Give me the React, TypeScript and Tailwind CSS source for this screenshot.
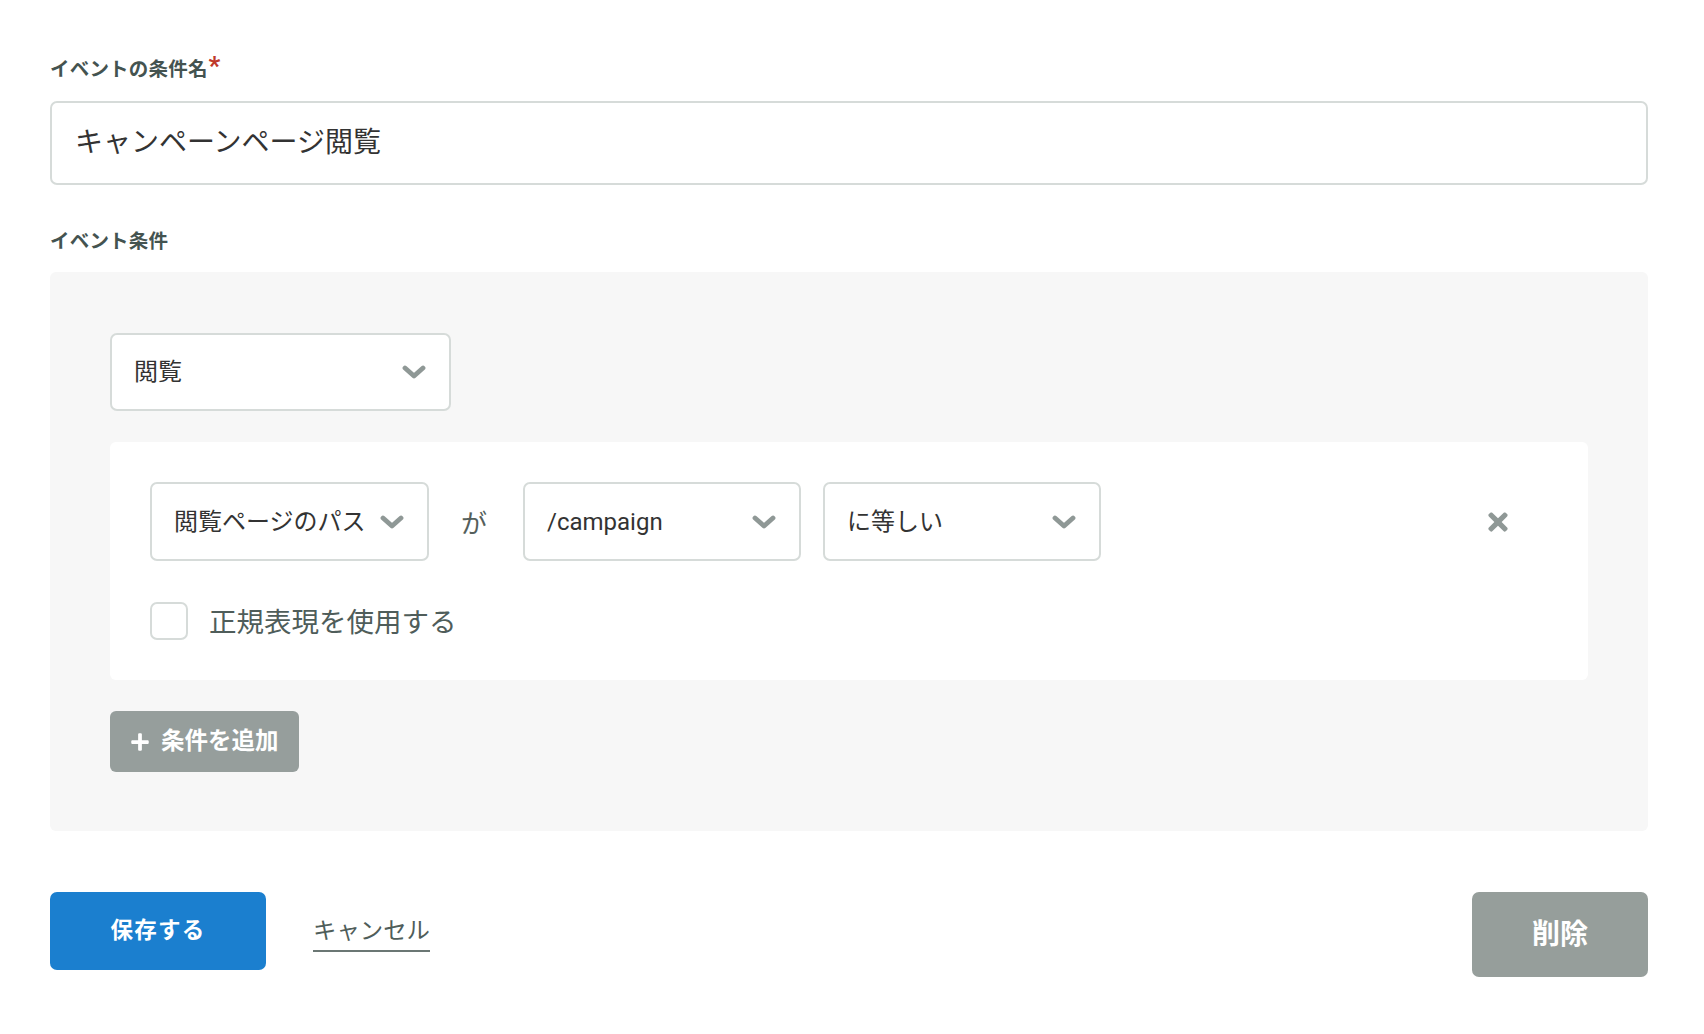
import { FaTimes, FaPlus } from 'react-icons/fa';

const Chevron = () => (
    <svg width="24" height="14" viewBox="0 0 24 14" className="text-[#8f9896]">
        <path
            d="M3 3 L12 11 L21 3"
            fill="none"
            stroke="currentColor"
            strokeWidth="4.8"
            strokeLinecap="round"
            strokeLinejoin="round"
        />
    </svg>
);

const Select = ({ label, width }: { label: string; width: string }) => {
    return (
        <div
            className={`flex items-center justify-between h-full ${width} bg-white border-2 border-[#d6dbd9] rounded-[7px] pl-[22px] pr-[23px]`}
        >
            <span className="text-[#333333] text-[24px] leading-none">{label}</span>
            <Chevron />
        </div>
    );
};

const App = () => {
    return (
        <div className="min-h-screen bg-white font-['Roboto','Noto_Sans_CJK_JP',sans-serif] pl-[50px] pr-[56px] pt-[56px] pb-[56px]">
            {/* 条件名 */}
            <div className="h-[28px] flex items-center text-[19.5px] font-bold text-[#445350] tracking-[0.2px]">
                イベントの条件名
                <span className="text-[#c0392b] text-[26px] font-bold self-start leading-none -mt-[3px] ml-[1px]">*</span>
            </div>
            <div className="mt-[17px] h-[84px] border-2 border-[#d6dbd9] rounded-[7px] flex items-center px-[23px]">
                <span className="text-[28px] text-[#333333] leading-none">キャンペーンページ閲覧</span>
            </div>

            {/* イベント条件 */}
            <div className="mt-[43px] h-[28px] flex items-center text-[19.5px] font-bold text-[#445350] tracking-[0.2px]">
                イベント条件
            </div>
            <div className="mt-[16px] bg-[#f7f7f7] rounded-[6px] px-[60px] pt-[61px] pb-[59px]">
                <div className="h-[78px]">
                    <Select label="閲覧" width="w-[341px]" />
                </div>

                <div className="mt-[31px] bg-white rounded-[6px] px-[40px] pt-[40px] pb-[40px]">
                    <div className="flex items-center h-[79px]">
                        <Select label="閲覧ページのパス" width="w-[279px]" />
                        <span className="ml-[32px] mr-[36px] text-[26px] text-[#555f5c] leading-none mt-[4px]">が</span>
                        <Select label="/campaign" width="w-[278px]" />
                        <div className="w-[22px]" />
                        <Select label="に等しい" width="w-[278px]" />
                        <div className="flex-1" />
                        <FaTimes size={28} className="text-[#8f9896] mr-[36px]" />
                    </div>
                    <div className="mt-[41px] flex items-center">
                        <div className="w-[38px] h-[38px] bg-white border-2 border-[#d6dbd9] rounded-[7px]" />
                        <span className="ml-[21px] mt-[4px] text-[27.5px] text-[#4f5d5a] leading-none">正規表現を使用する</span>
                    </div>
                </div>

                <button className="mt-[31px] h-[61px] w-[189px] bg-[#969e9c] rounded-[6px] flex items-center pl-[20px] text-white font-bold">
                    <FaPlus size={20} />
                    <span className="ml-[11px] text-[23.5px] leading-none">条件を追加</span>
                </button>
            </div>

            {/* フッター */}
            <div className="mt-[61px] flex items-start justify-between">
                <div className="flex items-center">
                    <button className="h-[78px] w-[216px] bg-[#1b7fcf] rounded-[7px] text-white font-bold text-[22.5px] tracking-[1.2px]">
                        保存する
                    </button>
                    <span className="ml-[47px] text-[23.4px] text-[#4f5d5a] leading-none border-b-2 border-[#6b7774] pb-[6px] mt-[10px]">
                        キャンセル
                    </span>
                </div>
                <button className="h-[85px] w-[176px] bg-[#969e9b] rounded-[7px] text-white font-bold text-[28px]">
                    削除
                </button>
            </div>
        </div>
    );
};

export default App;
